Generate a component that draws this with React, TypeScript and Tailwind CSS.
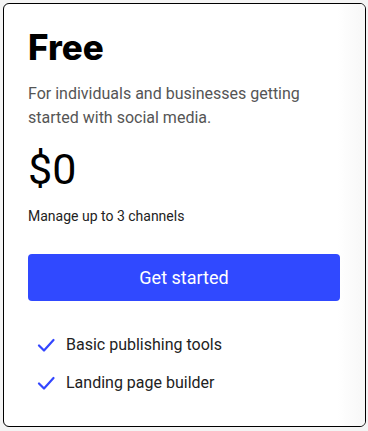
import React from "react";

const features = ["Basic publishing tools", "Landing page builder"];

function Check() {
  return (
    <svg width="18" height="18" viewBox="0 0 18 18" fill="none">
      <path d="M2 9.5 L7 14.5 L16.5 4" stroke="#3346ff" strokeWidth="2.2" strokeLinecap="round" strokeLinejoin="round" />
    </svg>
  );
}

export default function App() {
  return (
    <div className="min-h-[431px] w-[368px] bg-[#f4f4f4] p-[3px] pb-[4px]" style={{ fontFamily: "Roboto, sans-serif" }}>
      <div className="relative h-[424px] w-[363px] overflow-hidden rounded-[6px] border border-black bg-white">
        <div className="pointer-events-none absolute inset-y-0 right-0 w-[28px] bg-gradient-to-r from-white to-[#f7f7f7]" />
        <div className="relative px-[24px] pt-[21px]">
          <h2 className="text-[35px] font-extrabold leading-[44px] text-black" style={{ fontFamily: "Inter, sans-serif" }}>
            Free
          </h2>
          <p className="mt-[13px] text-[16px] leading-[24px] text-[#555]">
            For individuals and businesses getting started with social media.
          </p>
          <div className="mt-[15px] text-[43px] leading-[48px] text-black">$0</div>
          <p className="mt-[13px] text-[14px] leading-[20px] text-[#222]">Manage up to 3 channels</p>
          <button className="mt-[28px] flex h-[47px] w-[312px] items-center justify-center rounded-[4px] bg-[#3049ff] text-[18px] text-white">
            Get started
          </button>
          <ul className="mt-[32px] flex flex-col gap-[14px] pl-[9px]">
            {features.map((f) => (
              <li key={f} className="flex items-center gap-[11px] text-[16px] leading-[24px] text-[#222]">
                <Check />
                {f}
              </li>
            ))}
          </ul>
        </div>
      </div>
    </div>
  );
}
